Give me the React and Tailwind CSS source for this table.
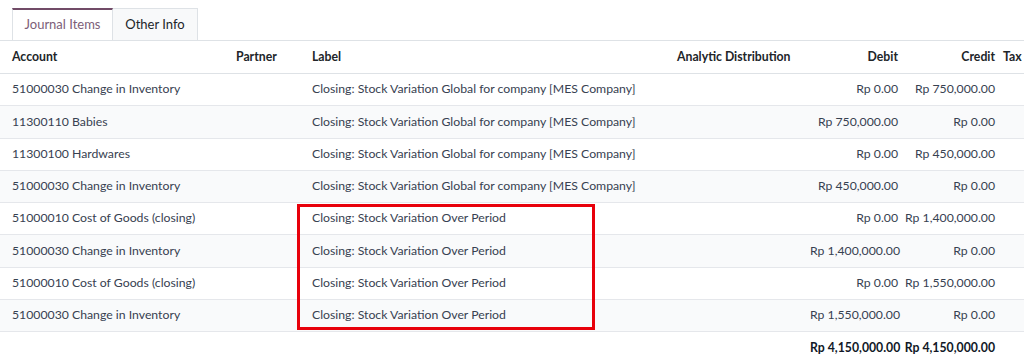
import React from 'react';

const rows = [
  { account: '51000030 Change in Inventory', label: 'Closing: Stock Variation Global for company [MES Company]', debit: 'Rp 0.00', credit: 'Rp 750,000.00' },
  { account: '11300110 Babies', label: 'Closing: Stock Variation Global for company [MES Company]', debit: 'Rp 750,000.00', credit: 'Rp 0.00' },
  { account: '11300100 Hardwares', label: 'Closing: Stock Variation Global for company [MES Company]', debit: 'Rp 0.00', credit: 'Rp 450,000.00' },
  { account: '51000030 Change in Inventory', label: 'Closing: Stock Variation Global for company [MES Company]', debit: 'Rp 450,000.00', credit: 'Rp 0.00' },
  { account: '51000010 Cost of Goods (closing)', label: 'Closing: Stock Variation Over Period', debit: 'Rp 0.00', credit: 'Rp 1,400,000.00' },
  { account: '51000030 Change in Inventory', label: 'Closing: Stock Variation Over Period', debit: 'Rp 1,400,000.00', credit: 'Rp 0.00' },
  { account: '51000010 Cost of Goods (closing)', label: 'Closing: Stock Variation Over Period', debit: 'Rp 0.00', credit: 'Rp 1,550,000.00' },
  { account: '51000030 Change in Inventory', label: 'Closing: Stock Variation Over Period', debit: 'Rp 1,550,000.00', credit: 'Rp 0.00' },
];

const cols = 'grid grid-cols-[232px_76px_365px_137px_92px_97px_1fr] items-center';

export default function App() {
  return (
    <div className="w-[1024px] h-[361px] overflow-hidden bg-white text-[12.25px] text-[#374151] font-['Lato',sans-serif]">
      {/* Tabs */}
      <div className="flex pt-2 pl-3 border-b border-[#dee2e6]">
        <div className="w-[101px] h-[32px] -mb-px flex items-center justify-center bg-white border-t-2 border-t-[#714B67] border-x border-x-[#dee2e6] text-[#7c5e78] text-[13px]">
          Journal Items
        </div>
        <div className="w-[85px] h-[32px] flex items-center justify-center bg-[#f8f9fa] border-t border-r border-[#dee2e6] text-[#212529] text-[13px]">
          Other Info
        </div>
      </div>

      <div className="relative">
        {/* Header */}
        <div className={`${cols} h-[33px] border-b border-[#dee2e6] font-bold text-[#212529] whitespace-nowrap`}>
          <div className="pl-3">Account</div>
          <div className="pl-1">Partner</div>
          <div className="pl-1">Label</div>
          <div className="pl-1">Analytic Distribution</div>
          <div className="pr-1 text-right">Debit</div>
          <div className="pr-1 text-right">Credit</div>
          <div className="pl-1">Tax</div>
        </div>

        {rows.map((r, i) => (
          <div
            key={i}
            className={`${cols} h-[32.25px] border-b border-[#e5e7eb] whitespace-nowrap ${i % 2 === 1 ? 'bg-[#f9fafb]' : 'bg-white'}`}
          >
            <div className="pl-3">{r.account}</div>
            <div className="pl-1"></div>
            <div className="pl-1">{r.label}</div>
            <div className="pl-1"></div>
            <div className="pr-1 text-right">{r.debit}</div>
            <div className="pr-1 text-right">{r.credit}</div>
            <div className="pl-1"></div>
          </div>
        ))}

        {/* Totals */}
        <div className={`${cols} h-[32px] font-bold text-[#111827] whitespace-nowrap`}>
          <div></div>
          <div></div>
          <div></div>
          <div></div>
          <div className="pr-1 text-right">Rp 4,150,000.00</div>
          <div className="pr-1 text-right">Rp 4,150,000.00</div>
          <div></div>
        </div>

        {/* Highlight box */}
        <div className="absolute left-[297px] top-[163px] w-[298px] h-[126px] border-[3px] border-[#e8000b] pointer-events-none"></div>
      </div>
    </div>
  );
}
